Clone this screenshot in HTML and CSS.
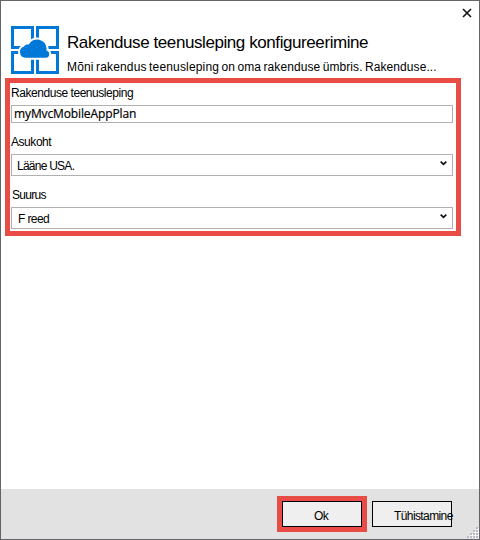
FILE: index.html
```html
<!DOCTYPE html>
<html lang="et">
<head>
<meta charset="utf-8">
<title>Rakenduse teenusleping</title>
<link rel="stylesheet" href="styles.css">
</head>
<body>
<main class="dialog">
  <button class="close" aria-label="Sule"><svg width="10" height="10" viewBox="0 0 10 10"><path d="M1 1l8 8M9 1l-8 8"/></svg></button>
  <header class="header">
    <svg class="logo" width="48" height="48" viewBox="0 0 48 48">
      <g class="frames"><path d="M1.5 1.5h20v20h-20zM26.5 1.5h20v20h-20zM1.500 26.500h20v20h-20zM26.500 26.500h20v20h-20z"/></g>
      <path class="cloud" d="M14.500 31.800a5.800 5.800 0 0 1-1.500-11.300C14 18.800 15.500 18.300 17.800 18.600A9.400 9.400 0 0 1 35.600 22.500L35.300 24.600A3.700 3.700 0 0 1 35.500 31.800z"/>
    </svg>
    <div class="heading">
      <h1 class="title">Rakenduse teenusleping konfigureerimine</h1>
      <p class="subtitle"><span class="lead">Mõni rakendus teenusleping on </span><span class="rest">oma rakenduse ümbris. Rakenduse...</span></p>
    </div>
  </header>
  <section class="form">
    <div class="label">Rakenduse teenusleping</div>
    <div class="field input">myMvcMobileAppPlan</div>
    <div class="label label-location">Asukoht</div>
    <div class="field select"><span class="location">Lääne USA.</span><svg class="chevron" width="7" height="5" viewBox="0 0 7 5"><path d="M.7.6l2.800 2.800L6.300.6"/></svg></div>
    <div class="label label-size">Suurus</div>
    <div class="field select"><span class="size">F reed</span><svg class="chevron" width="7" height="5" viewBox="0 0 7 5"><path d="M.7.6l2.800 2.800L6.300.6"/></svg></div>
  </section>
  <footer class="footer">
    <div class="highlight"><button class="button ok">Ok</button></div>
    <button class="button cancel">Tühistamine</button>
    <svg class="grip" width="12" height="12" viewBox="0 0 12 12">
      <path class="grip-light" d="M10 2h2v2h-2zM7 5h2v2h-2zM10 5h2v2h-2zM4 8h2v2h-2zM7 8h2v2h-2zM10 8h2v2h-2zM1 11h2v1h-2zM4 11h2v1h-2zM7 11h2v1h-2zM10 11h2v1h-2z"/>
      <path class="grip-dark" d="M9 1h2v2h-2zM6 4h2v2h-2zM9 4h2v2h-2zM3 7h2v2h-2zM6 7h2v2h-2zM9 7h2v2h-2zM0 10h2v2h-2zM3 10h2v2h-2zM6 10h2v2h-2zM9 10h2v2h-2z"/>
    </svg>
  </footer>
</main>
</body>
</html>
```
FILE: styles.css
```css
* { box-sizing: border-box; }
body { margin: 0; font: 12px/14px "Liberation Sans", Arial, sans-serif; color: #000; }
.dialog { position: relative; display: flex; flex-direction: column; width: 480px; height: 540px; border: 1px solid #646466; background: #fff; overflow: hidden; }
.close { position: absolute; top: 7px; right: 7px; width: 10px; height: 10px; padding: 0; border: 0; background: none; }
.close svg { display: block; }
.close path { fill: none; stroke: #111; stroke-width: 1.6; }
.header { display: flex; height: 77px; padding: 25px 0 0 10px; }
.logo { flex: none; }
.frames path { fill: none; stroke: #0078d7; stroke-width: 3; }
.cloud { fill: #0078d7; stroke: #fff; stroke-width: 4; paint-order: stroke; }
.heading { padding: 7px 0 0 8px; white-space: nowrap; }
.title { margin: 0; font-size: 17px; line-height: 20px; font-weight: 400; letter-spacing: -.42px; }
.subtitle { margin: 6px 0 0; font-size: 12px; line-height: 16px; }
.lead { letter-spacing: .16px; word-spacing: -1.1px; }
.rest { letter-spacing: .08px; word-spacing: -1px; }
.form { width: 456px; height: 158px; margin-left: 4px; padding: 3px 3px 0 1px; border: 5px solid #e94b45; white-space: nowrap; }
.label { height: 14px; margin-bottom: 5px; letter-spacing: -.45px; }
.label-location { margin-top: 12px; }
.label-size { margin-top: 12px; padding-left: 1px; letter-spacing: -.7px; }
.field { display: flex; align-items: center; border: 1px solid #b1b1b1; }
.input { height: 18px; padding-left: 2px; font: 12px/16px "Open Sans", sans-serif; letter-spacing: -.12px; -webkit-text-stroke: .2px #000; }
.select { height: 22px; padding: 0 5px 0 5px; justify-content: space-between; }
.location, .size { padding-top: 2px; letter-spacing: -.6px; }
.location { letter-spacing: -.75px; }
.chevron { margin-top: -4px; }
.chevron path { fill: none; stroke: #111; stroke-width: 1.7; }
.size { padding-left: 1px; }
.footer { position: relative; display: flex; height: 50px; margin-top: auto; padding: 7px 0 0 276px; background: #e2e2e2; }
.highlight { width: 90px; height: 36px; border: 5px solid #e94b45; }
.button { display: block; width: 80px; height: 26px; padding: 3px 0 0; border: 1px solid #000; border-radius: 0; background: #efefef; color: #000; font: 12px/14px "Liberation Sans", Arial, sans-serif; letter-spacing: -.6px; white-space: nowrap; }
.ok { padding-right: 2px; }
.cancel { margin: 5px 0 0 5px; padding-left: 21px; text-align: left; }
.grip { position: absolute; right: 0; bottom: 1px; }
.grip-light { fill: #fff; }
.grip-dark { fill: #b9bcc8; }
```
